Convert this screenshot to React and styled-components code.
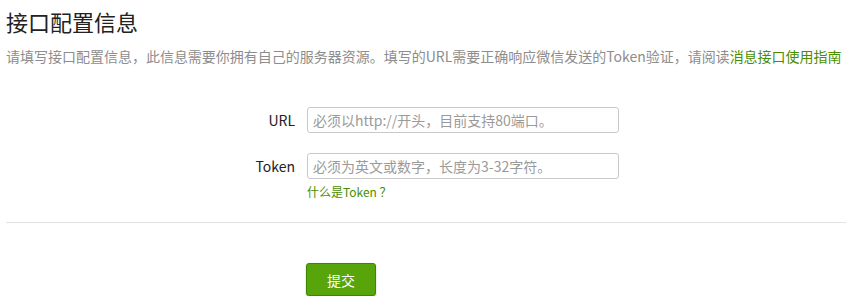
import React from "react";
import styled, { createGlobalStyle } from "styled-components";

const Global = createGlobalStyle`
  html, body { margin: 0; padding: 0; background: #fff; }
  body { font-family: "Noto Sans CJK SC", "Noto Sans", sans-serif; }
  * { box-sizing: border-box; }
`;

const Page = styled.div`
  padding: 6px 0 0 6px;
  width: 846px;
`;

const Title = styled.h2`
  margin: 0;
  font-size: 22px;
  line-height: 30px;
  font-weight: 400;
  color: #222;
`;

const Desc = styled.p`
  margin: 10px 0 0;
  font-size: 14px;
  line-height: 20px;
  color: #8d8d8d;
  white-space: nowrap;
  letter-spacing: -0.01px;
`;

const Link = styled.a`
  color: #4b8d00;
  text-decoration: none;
`;

const Form = styled.div`
  margin-top: 41px;
  display: flex;
  flex-direction: column;
  gap: 20px;
`;

const Row = styled.div`
  display: flex;
  align-items: flex-start;
  gap: 12px;
`;

const Label = styled.label`
  width: 289px;
  text-align: right;
  font-size: 14px;
  line-height: 26px;
  color: #222;
`;

const Field = styled.div`
  display: flex;
  flex-direction: column;
`;

const Input = styled.input`
  width: 312px;
  height: 26px;
  border: 1px solid #c9c9c9;
  border-radius: 3px;
  padding: 0 5px;
  font-family: inherit;
  font-size: 14px;
  color: #222;
  outline: none;
  &::placeholder { color: #9a9a9a; }
`;

const Hint = styled.a`
  margin-top: 4px;
  font-size: 12px;
  line-height: 18px;
  color: #4b8d00;
  text-decoration: none;
`;

const Divider = styled.hr`
  margin: 21px 0 0;
  border: 0;
  border-top: 1px solid #e1e1e1;
  height: 0;
`;

const Actions = styled.div`
  margin-top: 40px;
  padding-left: 300px;
`;

const Button = styled.button`
  width: 70px;
  height: 33px;
  border: 1px solid #3f8600;
  border-radius: 3px;
  background: #58a50b;
  color: #fff;
  font-family: inherit;
  font-size: 14px;
  box-shadow: 0 1px 2px rgba(0, 0, 0, 0.25);
  cursor: pointer;
`;

export default function App() {
  return (
    <>
      <Global />
      <Page>
        <Title>接口配置信息</Title>
        <Desc>
          请填写接口配置信息，此信息需要你拥有自己的服务器资源。填写的URL需要正确响应微信发送的Token验证，请阅读
          <Link href="#">消息接口使用指南</Link>
        </Desc>
        <Form>
          <Row>
            <Label>URL</Label>
            <Field>
              <Input placeholder="必须以http://开头，目前支持80端口。" />
            </Field>
          </Row>
          <Row>
            <Label>Token</Label>
            <Field>
              <Input placeholder="必须为英文或数字，长度为3-32字符。" />
              <Hint href="#">什么是Token ？</Hint>
            </Field>
          </Row>
        </Form>
        <Divider />
        <Actions>
          <Button>提交</Button>
        </Actions>
      </Page>
    </>
  );
}
